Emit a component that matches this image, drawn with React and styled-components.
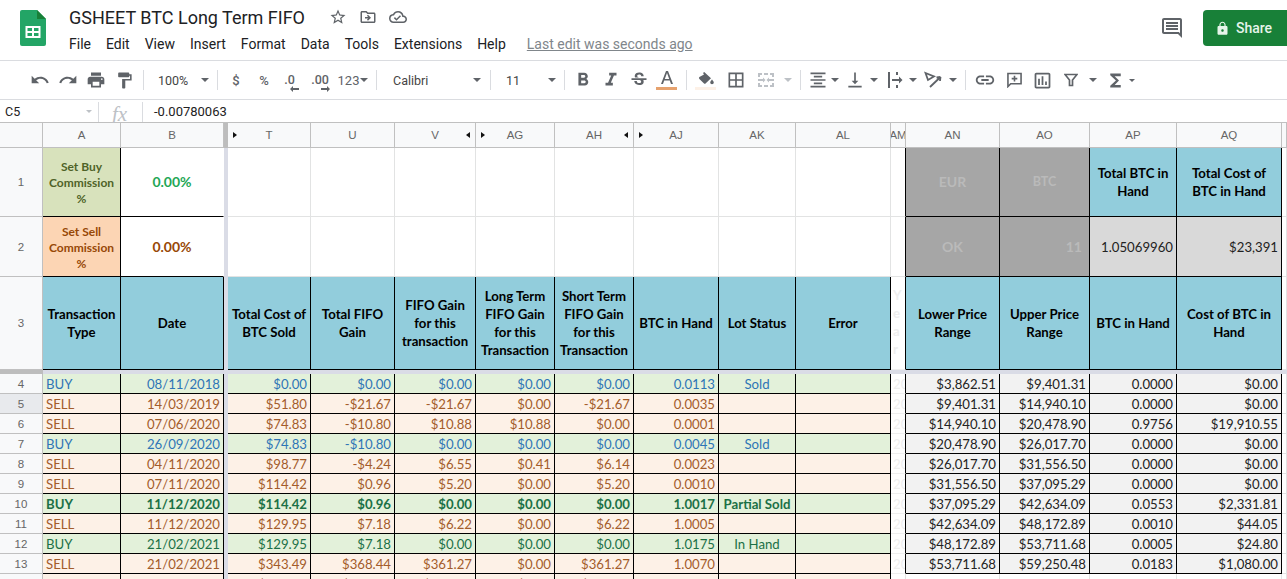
import React from 'react'
import styled, { createGlobalStyle } from 'styled-components'
import {
  MdUndo, MdRedo, MdPrint, MdFormatPaint, MdFormatBold, MdFormatItalic, MdStrikethroughS,
  MdBorderAll, MdFormatAlignCenter, MdVerticalAlignBottom, MdInsertLink,
  MdOutlineInsertChart, MdFunctions, MdStarBorder, MdOutlineDriveFileMove,
  MdOutlineCloudDone, MdOutlineComment, MdLock,
} from 'react-icons/md'

const GlobalStyle = createGlobalStyle`
  html, body {
    margin: 0;
    height: 579px;
    overflow: hidden;
    background: white;
  }
`

const Page = styled.div`
  width: 1287px;
  height: 579px;
  overflow: hidden;
  font-family: Roboto, "Liberation Sans", sans-serif;
  color: #202124;
`

const TitleBar = styled.header`
  display: flex;
  height: 60px;
  border-bottom: 1px solid #dadce0;
  padding-left: 20px;
`

const Logo = styled.svg`
  width: 26px;
  height: 36px;
  margin-top: 10px;
  flex: none;
`

const TitleColumn = styled.div`
  display: flex;
  flex-direction: column;
  margin-left: 23px;
  flex: 1;
`

const TitleRow = styled.div`
  display: flex;
  align-items: center;
  height: 34px;
`

const DocName = styled.div`
  font-size: 18px;
  width: 254px;
  white-space: nowrap;
`

const TitleIcon = styled.span`
  display: flex;
  justify-content: center;
  width: 30px;
  color: #5f6368;
  font-size: 18px;
`

const MenuRow = styled.nav`
  display: flex;
  align-items: center;
  gap: 15px;
  font-size: 14px;
  height: 18px;
  margin-top: 1px;
`

const LastEdit = styled.a`
  margin-left: 6px;
  color: #80868b;
  text-decoration: underline;
`

const CommentButton = styled.span`
  display: flex;
  color: #5f6368;
  font-size: 24px;
  margin: 16px 19px 0 0;
  height: 24px;
`

const ShareButton = styled.button`
  display: flex;
  align-items: center;
  gap: 6px;
  width: 84px;
  height: 36px;
  margin-top: 10px;
  padding: 0 0 0 12px;
  border: 0;
  border-radius: 4px 0 0 4px;
  background: #188038;
  color: #e6f4ea;
  font: 500 14px Roboto, sans-serif;
`

const ToolBar = styled.div`
  display: flex;
  align-items: center;
  height: 38px;
  padding-left: 26px;
  border-bottom: 1px solid #dadce0;
  color: #5f6368;
  font-size: 13px;
`

const Tool = styled.span`
  position: relative;
  display: flex;
  align-items: center;
  justify-content: ${p => p.$justify || 'center'};
  width: ${p => p.$w || 28}px;
  height: 24px;
  flex: none;
  font-size: ${p => p.$size || 18}px;
  font-weight: ${p => p.$weight || 400};
  color: #5f6368;
  box-sizing: border-box;
`

const Sep = styled.span`
  width: 1px;
  height: 20px;
  background: #dadce0;
  flex: none;
  margin-left: ${p => p.$ml || 0}px;
  margin-right: ${p => p.$mr || 0}px;
`

const Caret = styled.span`
  width: 0;
  height: 0;
  flex: none;
  border-left: ${p => (p.$small ? 3 : 4)}px solid transparent;
  border-right: ${p => (p.$small ? 3 : 4)}px solid transparent;
  border-top: ${p => (p.$small ? 3 : 4)}px solid ${p => (p.$muted ? '#bdc1c6' : '#5f6368')};
  margin-left: ${p => p.$ml || 0}px;
`

const SelectBox = styled.span`
  display: flex;
  align-items: center;
  justify-content: space-between;
  width: ${p => p.$w}px;
  padding: 0 ${p => p.$pr}px 0 ${p => p.$pl}px;
  box-sizing: border-box;
  flex: none;
  font-size: 12.5px;
  color: #444;
`

const DecimalLabel = styled.span`
  font-size: 12.5px;
  font-weight: 500;
  margin-top: -2px;
  margin-right: ${p => p.$mr || 0}px;
`

const DecimalArrow = styled.svg`
  position: absolute;
  bottom: 0;
  right: ${p => p.$right}px;
  width: 9px;
  height: 6px;
`

const FormulaBar = styled.div`
  display: flex;
  align-items: center;
  height: 21px;
  padding-top: 1px;
  border-bottom: 1px solid #c0c0c0;
  font-size: 13px;
  color: #222;
`

const NameBox = styled.div`
  display: flex;
  align-items: center;
  justify-content: space-between;
  width: 99px;
  padding: 0 6px 0 5px;
  box-sizing: border-box;
  border-right: 1px solid #dadce0;
  height: 20px;
  font-size: 12.5px;
`

const FxLabel = styled.div`
  width: 44px;
  box-sizing: border-box;
  padding-left: 13px;
  border-right: 1px solid #dadce0;
  height: 20px;
  line-height: 19px;
  font: italic 21px "Liberation Serif", serif;
  color: #bdc1c6;
`

const FormulaText = styled.div`
  padding-left: 11px;
  font-size: 13px;
`

const Sheet = styled.div`
  display: grid;
  grid-template-columns: 43px 78px 103px 4px 83px 84px 81px 79px 79px 85px 77px 95px 15px 94px 90px 87px 105px 5px;
  grid-template-rows: 25px 69px 60px 93px 4px repeat(11, 20px);
`

const ColHead = styled.div`
  position: relative;
  display: flex;
  align-items: center;
  justify-content: center;
  box-sizing: border-box;
  background: #f8f9fa;
  border-right: 1px solid #c0c0c0;
  border-bottom: 1px solid #c0c0c0;
  color: #666;
  font: 11.5px "Liberation Sans", sans-serif;
  white-space: nowrap;
  overflow: hidden;

  &::before {
    content: ${p => (p.$open ? '""' : 'none')};
    position: absolute;
    top: 9px;
    ${p => (p.$open === 'left' ? 'left: 5px;' : 'right: 5px;')}
    border-top: 3px solid transparent;
    border-bottom: 3px solid transparent;
    ${p => (p.$open === 'left' ? 'border-left: 4px solid #111;' : 'border-right: 4px solid #111;')}
  }
`

const RowHead = styled.div`
  display: flex;
  align-items: center;
  justify-content: center;
  box-sizing: border-box;
  background: ${p => (p.$selected ? '#e8eaed' : '#f8f9fa')};
  border-right: 1px solid #c0c0c0;
  border-bottom: 1px solid #c0c0c0;
  color: #666;
  font: 11.5px "Liberation Sans", sans-serif;
`

const FreezeBand = styled.div`
  background: ${p => (p.$dark ? '#bdbdbd' : '#dadce6')};
  grid-column: ${p => p.$span || 'auto'};
`

const Cell = styled.div`
  display: flex;
  align-items: center;
  justify-content: ${p => (p.$align === 'left' ? 'flex-start' : p.$align === 'center' ? 'center' : 'flex-end')};
  box-sizing: border-box;
  padding: ${p => p.$pt || 0}px ${p => p.$pr || 3}px 0 3px;
  overflow: hidden;
  white-space: pre-line;
  text-align: center;
  background: ${p => p.$bg || 'white'};
  color: ${p => p.$fg || '#222'};
  font-family: Lato, "Noto Sans", sans-serif;
  font-size: ${p => p.$size || 13.2}px;
  font-weight: ${p => (p.$bold ? 700 : 400)};
  line-height: ${p => p.$lh || 18}px;
  border-right: 1px solid ${p => (p.$noRight ? (p.$bg || 'white') : '#000')};
  border-bottom: 1px solid #000;
`

const BlankCell = styled.div`
  box-sizing: border-box;
  border-right: 1px solid ${p => (p.$edge ? '#000' : '#e2e3e3')};
  border-bottom: 1px solid #e2e3e3;
  background: white;
`

const HeadCell = styled(Cell).attrs({ $bg: '#92cddc', $fg: '#000', $bold: true, $align: 'center' })``

const MaskCell = styled(Cell).attrs({ $bg: '#a6a6a6', $fg: '#bababa', $bold: true })``

const FaintCell = styled(Cell).attrs({ $align: 'left', $fg: '#eeeeee' })`
  padding: 0 0 0 2px;
  white-space: nowrap;
  border-bottom-color: #eeeeee;
  border-right-color: ${p => (p.$edge ? '#000' : '#e2e3e3')};
`

const YearCell = styled(FaintCell)`
  white-space: pre-line;
  text-align: left;
  font-weight: 700;
  padding-bottom: 2px;
`

const RangeCell = styled(Cell).attrs({ $bg: '#f2f2f2' })``

const TONES = {
  buy: { bg: '#e3f1da', fg: '#2e75b6' },
  sell: { bg: '#fdf1e7', fg: '#a35c2b' },
  hand: { bg: '#e3f1da', fg: '#1b7046' },
  partial: { bg: '#e3f1da', fg: '#1b7046', bold: true },
}

const rows = [
  { n: 4, tone: 'buy', type: 'BUY', values: ['08/11/2018', '$0.00', '$0.00', '$0.00', '$0.00', '$0.00', '0.0113'], lot: 'Sold', range: ['$3,862.51', '$9,401.31', '0.0000', '$0.00'] },
  { n: 5, tone: 'sell', type: 'SELL', values: ['14/03/2019', '$51.80', '-$21.67', '-$21.67', '$0.00', '-$21.67', '0.0035'], range: ['$9,401.31', '$14,940.10', '0.0000', '$0.00'] },
  { n: 6, tone: 'sell', type: 'SELL', values: ['07/06/2020', '$74.83', '-$10.80', '$10.88', '$10.88', '$0.00', '0.0001'], range: ['$14,940.10', '$20,478.90', '0.9756', '$19,910.55'] },
  { n: 7, tone: 'buy', type: 'BUY', values: ['26/09/2020', '$74.83', '-$10.80', '$0.00', '$0.00', '$0.00', '0.0045'], lot: 'Sold', range: ['$20,478.90', '$26,017.70', '0.0000', '$0.00'] },
  { n: 8, tone: 'sell', type: 'SELL', values: ['04/11/2020', '$98.77', '-$4.24', '$6.55', '$0.41', '$6.14', '0.0023'], range: ['$26,017.70', '$31,556.50', '0.0000', '$0.00'] },
  { n: 9, tone: 'sell', type: 'SELL', values: ['07/11/2020', '$114.42', '$0.96', '$5.20', '$0.00', '$5.20', '0.0010'], range: ['$31,556.50', '$37,095.29', '0.0000', '$0.00'] },
  { n: 10, tone: 'partial', type: 'BUY', values: ['11/12/2020', '$114.42', '$0.96', '$0.00', '$0.00', '$0.00', '1.0017'], lot: 'Partial Sold', range: ['$37,095.29', '$42,634.09', '0.0553', '$2,331.81'] },
  { n: 11, tone: 'sell', type: 'SELL', values: ['11/12/2020', '$129.95', '$7.18', '$6.22', '$0.00', '$6.22', '1.0005'], range: ['$42,634.09', '$48,172.89', '0.0010', '$44.05'] },
  { n: 12, tone: 'hand', type: 'BUY', values: ['21/02/2021', '$129.95', '$7.18', '$0.00', '$0.00', '$0.00', '1.0175'], lot: 'In Hand', range: ['$48,172.89', '$53,711.68', '0.0005', '$24.80'] },
  { n: 13, tone: 'sell', type: 'SELL', values: ['21/02/2021', '$343.49', '$368.44', '$361.27', '$0.00', '$361.27', '1.0070'], range: ['$53,711.68', '$59,250.48', '0.0183', '$1,080.00'] },
  { n: 14, tone: 'sell', type: 'SELL', values: ['27/02/2021', '$343.49', '$368.44', '$361.27', '$0.00', '$361.27', '1.0070'] },
]

const headers = ['Total Cost of\nBTC Sold', 'Total FIFO\nGain', 'FIFO Gain\nfor this\ntransaction', 'Long Term\nFIFO Gain\nfor this\nTransaction', 'Short Term\nFIFO Gain\nfor this\nTransaction', 'BTC in Hand', 'Lot Status', 'Error']
const rangeHeaders = ['Lower Price\nRange', 'Upper Price\nRange', 'BTC in Hand', 'Cost of BTC in\nHand']

const MergeIcon = () => (
  <svg width="18" height="18" viewBox="0 0 18 18" fill="#bdc1c6">
    <path d="M1 2h4v2H3v2H1zM7 2h4v2H7zM13 2h4v4h-2V4h-2zM1 12h2v2h2v2H1zM7 14h4v2H7zM15 12h2v4h-4v-2h2zM1 8h5V6.5L8.5 9 6 11.5V10H1zM17 8h-5V6.5L9.5 9l2.5 2.5V10h5z" />
  </svg>
)

const WrapIcon = () => (
  <svg width="16" height="18" viewBox="0 0 16 18" fill="#5f6368">
    <path d="M1 1h2v16H1zM9 1h2v3H9zM9 14h2v3H9zM5 8h7V5.5L15.5 9 12 12.5V10H5z" />
  </svg>
)

const RotateIcon = () => (
  <svg width="18" height="18" viewBox="0 0 18 18" fill="none" stroke="#5f6368" strokeWidth="1.8">
    <path d="M1.5 2l2.5 7L10 5.5z" />
    <path d="M6 16L16.5 6M16.5 6l-4 .5M16.5 6l-.5 4" />
  </svg>
)

const FilterIcon = () => (
  <svg width="14" height="14" viewBox="0 0 14 14" fill="none" stroke="#5f6368" strokeWidth="1.7">
    <path d="M1 1.5h12L8.5 7v5.5h-3V7z" />
  </svg>
)

const AddCommentIcon = () => (
  <svg width="15" height="16" viewBox="0 0 16 17" fill="none" stroke="#5f6368" strokeWidth="1.7">
    <path d="M1 1.5h14v11H4l-3 3z" />
    <path d="M8 4v6M5 7h6" />
  </svg>
)

const TextColorIcon = () => (
  <svg width="22" height="24" viewBox="0 0 22 24">
    <path d="M10 3h2l5 13h-2l-1.2-3.4H8.2L7 16H5zM8.8 11h4.4L11 5z" fill="#5f6368" />
    <rect x="0" y="19" width="21" height="3" fill="#e6a26e" />
  </svg>
)

const FillIcon = () => (
  <svg width="22" height="24" viewBox="0 0 22 24">
    <path d="M8 5l1.2-1L16 10.2 10.8 15.2a1.4 1.4 0 0 1-2 0L4.4 11a1.4 1.4 0 0 1 0-2L9 6.4z" fill="#5f6368" />
    <path d="M17 11.5s1.8 2 1.8 3a1.8 1.8 0 0 1-3.6 0c0-1 1.8-3 1.8-3z" fill="#5f6368" />
    <rect x="0" y="19" width="21" height="3" fill="#fdf1e7" />
  </svg>
)

const App = () => (
  <Page>
    <GlobalStyle />
    <TitleBar>
      <Logo viewBox="0 0 26 36">
        <path d="M2 0h15l9 9v25a2 2 0 0 1-2 2H2a2 2 0 0 1-2-2V2a2 2 0 0 1 2-2z" fill="#23a566" />
        <path d="M17 0l9 9h-9z" fill="#188038" />
        <path d="M5.5 16h15v12h-15zM7.5 18v3h4.5v-3zM14 18v3h4.5v-3zM7.5 23v3h4.5v-3zM14 23v3h4.5v-3z" fill="white" fillRule="evenodd" />
      </Logo>
      <TitleColumn>
        <TitleRow>
          <DocName>GSHEET BTC Long Term FIFO</DocName>
          <TitleIcon><MdStarBorder /></TitleIcon>
          <TitleIcon><MdOutlineDriveFileMove /></TitleIcon>
          <TitleIcon><MdOutlineCloudDone /></TitleIcon>
        </TitleRow>
        <MenuRow>
          <span>File</span>
          <span>Edit</span>
          <span>View</span>
          <span>Insert</span>
          <span>Format</span>
          <span>Data</span>
          <span>Tools</span>
          <span>Extensions</span>
          <span>Help</span>
          <LastEdit>Last edit was seconds ago</LastEdit>
        </MenuRow>
      </TitleColumn>
      <CommentButton><MdOutlineComment /></CommentButton>
      <ShareButton><MdLock size={15} />Share</ShareButton>
    </TitleBar>

    <ToolBar>
      <Tool><MdUndo size={20} /></Tool>
      <Tool><MdRedo size={20} /></Tool>
      <Tool><MdPrint size={20} /></Tool>
      <Tool><MdFormatPaint size={19} /></Tool>
      <Sep $ml={5} />
      <SelectBox $w={73} $pl={14} $pr={8}>100%<Caret /></SelectBox>
      <Sep />
      <Tool $w={4} />
      <Tool $size={13} $weight={500}>$</Tool>
      <Tool $size={13} $weight={500}>%</Tool>
      <Tool>
        <DecimalLabel $mr={5}>.0</DecimalLabel>
        <DecimalArrow $right={7} viewBox="0 0 9 6"><path d="M0 3l3-3v2h6v2H3v2z" fill="#5f6368" /></DecimalArrow>
      </Tool>
      <Tool>
        <DecimalLabel>.00</DecimalLabel>
        <DecimalArrow $right={4} viewBox="0 0 9 6"><path d="M9 3L6 0v2H0v2h6v2z" fill="#5f6368" /></DecimalArrow>
      </Tool>
      <Tool $w={38} $size={13}>123<Caret $ml={1} /></Tool>
      <Sep $ml={4} />
      <SelectBox $w={113} $pl={16} $pr={9}>Calibri<Caret /></SelectBox>
      <Sep />
      <SelectBox $w={73} $pl={15} $pr={8}>11<Caret /></SelectBox>
      <Sep $mr={4} />
      <Tool><MdFormatBold size={22} /></Tool>
      <Tool><MdFormatItalic size={22} /></Tool>
      <Tool><MdStrikethroughS size={20} /></Tool>
      <Tool><TextColorIcon /></Tool>
      <Sep $ml={5} />
      <Tool $w={38}><FillIcon /></Tool>
      <Tool $w={22}><MdBorderAll size={20} /></Tool>
      <Tool $w={38}><MergeIcon /></Tool>
      <Tool $w={6}><Caret $muted /></Tool>
      <Sep $ml={9} />
      <Tool $w={27} $justify="flex-end"><MdFormatAlignCenter size={20} /></Tool>
      <Tool $w={14}><Caret /></Tool>
      <Tool $w={26}><MdVerticalAlignBottom size={20} /></Tool>
      <Tool $w={12}><Caret /></Tool>
      <Tool $w={30}><WrapIcon /></Tool>
      <Tool $w={6}><Caret /></Tool>
      <Tool $w={34}><RotateIcon /></Tool>
      <Tool $w={6}><Caret /></Tool>
      <Sep $ml={9} />
      <Tool $w={38}><MdInsertLink size={22} /></Tool>
      <Tool $w={20}><AddCommentIcon /></Tool>
      <Tool $w={36}><MdOutlineInsertChart size={21} /></Tool>
      <Tool $w={22}><FilterIcon /></Tool>
      <Tool $w={22}><Caret /></Tool>
      <Tool $w={22}><MdFunctions size={21} /></Tool>
      <Tool $w={12}><Caret $small /></Tool>
    </ToolBar>

    <FormulaBar>
      <NameBox>C5<Caret $muted $small /></NameBox>
      <FxLabel>fx</FxLabel>
      <FormulaText>-0.00780063</FormulaText>
    </FormulaBar>

    <Sheet>
      <ColHead />
      <ColHead>A</ColHead>
      <ColHead>B</ColHead>
      <FreezeBand $dark />
      <ColHead $open="left">T</ColHead>
      <ColHead>U</ColHead>
      <ColHead $open="right">V</ColHead>
      <ColHead $open="left">AG</ColHead>
      <ColHead $open="right">AH</ColHead>
      <ColHead $open="left">AJ</ColHead>
      <ColHead>AK</ColHead>
      <ColHead>AL</ColHead>
      <ColHead>AM</ColHead>
      <ColHead>AN</ColHead>
      <ColHead>AO</ColHead>
      <ColHead>AP</ColHead>
      <ColHead>AQ</ColHead>
      <ColHead />

      <RowHead>1</RowHead>
      <Cell $align="center" $bg="#d8e2bc" $fg="#4f6228" $bold $size={12} $lh={16} $pt={2}>{'Set Buy\nCommission\n%'}</Cell>
      <Cell $align="center" $fg="#1fa756" $bold $noRight $size={14}>0.00%</Cell>
      <FreezeBand />
      {Array.from({ length: 8 }, (_, i) => <BlankCell key={i} />)}
      <BlankCell $edge />
      <MaskCell $align="center" $size={14}>EUR</MaskCell>
      <MaskCell $align="center" $size={12.5}>BTC</MaskCell>
      <HeadCell>{'Total BTC in\nHand'}</HeadCell>
      <HeadCell>{'Total Cost of\nBTC in Hand'}</HeadCell>
      <BlankCell />

      <RowHead>2</RowHead>
      <Cell $align="center" $bg="#fcd5b4" $fg="#974806" $bold $size={12} $lh={16} $pt={2}>{'Set Sell\nCommission\n%'}</Cell>
      <Cell $align="center" $fg="#974806" $bold $noRight $size={14}>0.00%</Cell>
      <FreezeBand />
      {Array.from({ length: 8 }, (_, i) => <BlankCell key={i} />)}
      <BlankCell $edge />
      <MaskCell $align="center" $size={14}>OK</MaskCell>
      <MaskCell $size={14} $pr={7}>11</MaskCell>
      <Cell $bg="#d9d9d9">1.05069960</Cell>
      <Cell $bg="#d9d9d9">$23,391</Cell>
      <BlankCell />

      <RowHead>3</RowHead>
      <HeadCell>{'Transaction\nType'}</HeadCell>
      <HeadCell>Date</HeadCell>
      <FreezeBand />
      {headers.map(h => <HeadCell key={h}>{h}</HeadCell>)}
      <YearCell $edge>{'Y\ne\na\nr'}</YearCell>
      {rangeHeaders.map(h => <HeadCell key={h}>{h}</HeadCell>)}
      <BlankCell />

      <FreezeBand $dark />
      <FreezeBand $span="2 / -1" />

      {rows.map(row => {
        const tone = TONES[row.tone]
        const toned = { $bg: tone.bg, $fg: tone.fg, $bold: tone.bold }
        return (
          <React.Fragment key={row.n}>
            <RowHead $selected={row.n === 5}>{row.n}</RowHead>
            <Cell $align="left" {...toned}>{row.type}</Cell>
            <Cell {...toned}>{row.values[0]}</Cell>
            <FreezeBand />
            {row.values.slice(1).map((v, i) => <Cell key={i} {...toned}>{v}</Cell>)}
            <Cell $align="center" {...toned}>{row.lot}</Cell>
            <Cell {...toned} />
            <FaintCell $edge={!!row.range}>{row.values[0].slice(-4)}</FaintCell>
            {row.range
              ? row.range.map((v, i) => <RangeCell key={i}>{v}</RangeCell>)
              : Array.from({ length: 4 }, (_, i) => <BlankCell key={i} />)}
            <BlankCell />
          </React.Fragment>
        )
      })}
    </Sheet>
  </Page>
)

export default App
